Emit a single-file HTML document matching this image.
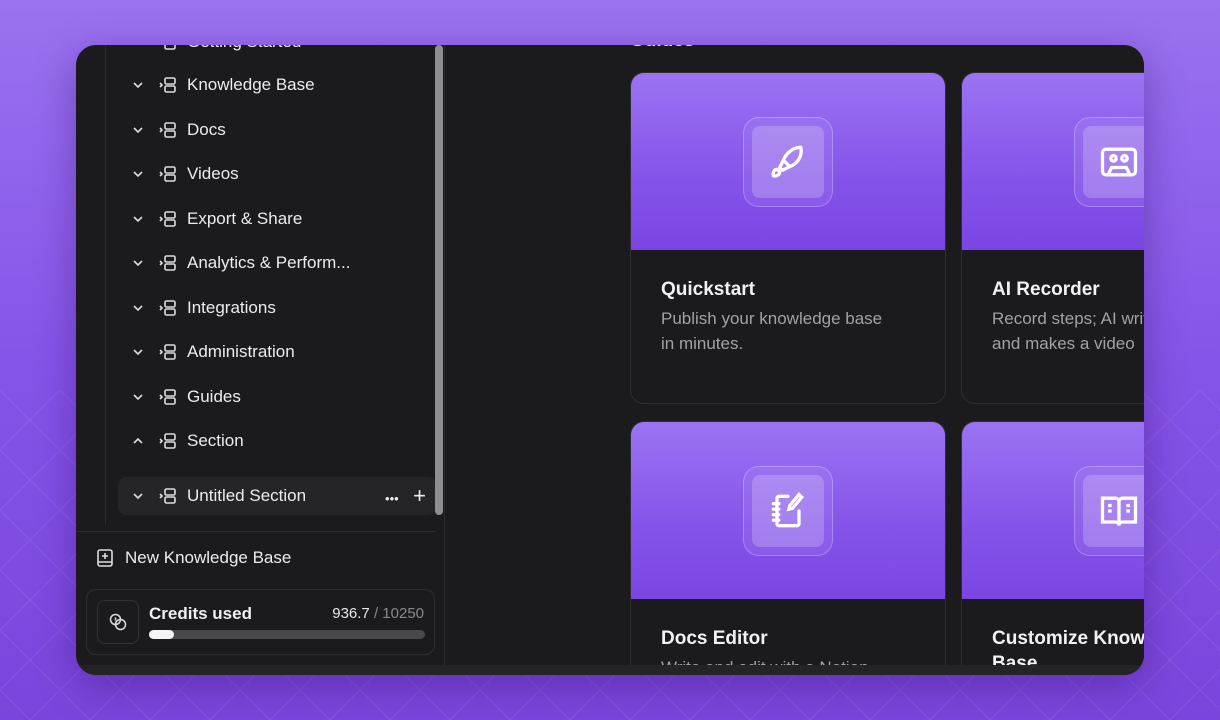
<!DOCTYPE html>
<html><head><style>
*{margin:0;padding:0;box-sizing:border-box}
body{width:1220px;height:720px;overflow:hidden;font-family:"Liberation Sans",sans-serif;background:linear-gradient(180deg,#9a72f0 0%,#8654e8 50%,#7a45dc 100%);position:relative}
.pat{position:absolute;left:0;right:0;bottom:0;height:330px;opacity:.06;background-image:linear-gradient(45deg,transparent 49%,#fff 49.5%,#fff 50.5%,transparent 51%),linear-gradient(-45deg,transparent 49%,#fff 49.5%,#fff 50.5%,transparent 51%);background-size:60px 60px}
.win{position:absolute;left:76px;top:45px;width:1068px;height:630px;background:#1b1b1d;border-radius:20px;overflow:hidden;box-shadow:0 10px 40px rgba(40,0,90,.35)}
.side{position:absolute;left:0;top:0;width:369px;height:630px;border-right:1px solid #2c2c2f}
.tline{position:absolute;left:29px;top:0;width:1px;height:480px;background:#2a2a2d}
.row{position:absolute;left:42px;height:38px;width:318px;color:#ececec;font-size:17px;display:flex;align-items:center}
.row .ch{width:40px;padding-left:13px;flex-shrink:0;display:flex}
.row .ic{width:29px;flex-shrink:0;display:flex}
.sb{position:absolute;left:359px;top:0;width:8px;height:470px;background:#8e8e92;border-radius:4px}
.card{position:absolute;width:316px;height:332px;border:1px solid #2e2e32;border-radius:14px;overflow:hidden;background:#1b1b1d}
.card .hd{height:177px;background:linear-gradient(180deg,#9b73f2 0%,#8553ea 60%,#7c45e3 100%);position:relative}
.ob{position:absolute;left:112px;top:44px;width:90px;height:90px;border-radius:16px;background:rgba(255,255,255,.08);border:1px solid rgba(255,255,255,.25)}
.ib{position:absolute;left:8px;top:8px;width:72px;height:72px;border-radius:8px;background:rgba(255,255,255,.2);display:flex;align-items:center;justify-content:center}
.card h3{position:absolute;left:30px;top:206px;font-size:19px;font-weight:bold;color:#f2f2f2;white-space:nowrap}
.card p{position:absolute;left:30px;top:233px;font-size:17px;line-height:25px;color:#a2a2a6;width:232px}
</style></head><body>
<div class="pat"></div>
<div class="win">
 <div class="side">
  <div class="tline"></div>
  <div style="position:absolute;left:42px;top:432px;width:318px;height:38px;background:#252528;border-radius:8px"></div>
  <div class="row" style="top:-22px"><span class="ch"></span><span class="ic"><svg width="20" height="20" viewBox="0 0 20 20" fill="none" stroke="#ddd" stroke-width="1.6"><rect x="7" y="3" width="10" height="6" rx="1.5"/><rect x="7" y="11" width="10" height="6" rx="1.5"/><path d="M2 8l2 2-2 2"/></svg></span><span class="t">Getting Started</span></div>
  <div id="rows"></div>
  <div class="sb"></div>
  <div style="position:absolute;left:0;top:486px;width:360px;height:1px;background:#2c2c2f"></div>
  <div style="position:absolute;left:20px;top:503px;color:#ececec;font-size:17px;display:flex;align-items:center"><svg width="18" height="20" viewBox="0 0 18 20" fill="none" stroke="#ddd" stroke-width="1.6"><rect x="2" y="2" width="14" height="16" rx="2"/><path d="M2 14h14M9 5v6M6 8h6"/></svg><span style="margin-left:11px">New Knowledge Base</span></div>
  <div style="position:absolute;left:10px;top:544px;width:349px;height:66px;border:1px solid #2e2e32;border-radius:10px">
   <div style="position:absolute;left:10px;top:10px;width:42px;height:44px;border:1px solid #333;border-radius:8px;display:flex;align-items:center;justify-content:center"><svg width="20" height="20" viewBox="0 0 20 20" fill="none" stroke="#ddd" stroke-width="1.5"><circle cx="7.5" cy="7.5" r="5"/><circle cx="12.5" cy="12.5" r="5"/><path d="M7.5 5.5v3"/></svg></div>
   <div style="position:absolute;left:62px;top:14px;color:#f0f0f0;font-size:17px;font-weight:bold">Credits used</div>
   <div style="position:absolute;right:10px;top:15px;color:#e8e8e8;font-size:15px">936.7 <span style="color:#8a8a8e">/ 10250</span></div>
   <div style="position:absolute;left:62px;top:40px;width:276px;height:9px;border-radius:5px;background:#48484c"><div style="width:25px;height:9px;border-radius:5px;background:#f4f4f4"></div></div>
  </div>
 </div>
 <div style="position:absolute;left:554px;top:-15px;color:#eee;font-size:19px;font-weight:bold">Guides</div>
 <div class="card" style="left:554px;top:27px"><div class="hd"><div class="ob"><div class="ib"><svg width="44" height="44" viewBox="0 0 24 24" fill="none" stroke="#fff" stroke-width="1.8" stroke-linecap="round" stroke-linejoin="round"><path d="M19 4c-4 0-8 3-9.5 7l3.5 3.5c4-1.5 7-5.5 6-10.5z"/><path d="M9.5 11l-2 4 1.5 1.5 4-2"/><path d="M6 16c-1.5 0-2.5 2-2 3.5 1.5.5 3.5-.5 3.5-2z"/></svg></div></div></div><h3>Quickstart</h3><p>Publish your knowledge base in minutes.</p></div>
 <div class="card" style="left:885px;top:27px"><div class="hd"><div class="ob"><div class="ib"><svg width="44" height="44" viewBox="0 0 24 24" fill="none" stroke="#fff" stroke-width="1.8"><rect x="3" y="5" width="18" height="14" rx="2"/><circle cx="9" cy="10" r="1.5"/><circle cx="15" cy="10" r="1.5"/><path d="M6 19l2-4h8l2 4"/></svg></div></div></div><h3>AI Recorder</h3><p style="white-space:nowrap">Record steps; AI writes it<br>and makes a video</p></div>
 <div class="card" style="left:554px;top:376px"><div class="hd"><div class="ob"><div class="ib"><svg width="44" height="44" viewBox="0 0 24 24" fill="none" stroke="#fff" stroke-width="1.8" stroke-linecap="round"><path d="M12 4H7a1 1 0 0 0-1 1v14a1 1 0 0 0 1 1h10a1 1 0 0 0 1-1v-7"/><path d="M4 8h3M4 11h3M4 14h3M4 17h3"/><path d="M18 3l1.5 1.5-5 6-2 .5.5-2z"/></svg></div></div></div><h3>Docs Editor</h3><p>Write and edit with a Notion-like editor</p></div>
 <div class="card" style="left:885px;top:376px"><div class="hd"><div class="ob"><div class="ib"><svg width="44" height="44" viewBox="0 0 24 24" fill="none" stroke="#fff" stroke-width="1.8"><path d="M3 5h7a2 2 0 0 1 2 2v13a2 2 0 0 0-2-2H3zM21 5h-7a2 2 0 0 0-2 2v13a2 2 0 0 1 2-2h7z"/><path d="M6 9h2M6 12h2M16 9h2M16 12h2"/></svg></div></div></div><h3>Customize Knowledge</h3><h3 style="top:231px">Base</h3></div>
 <div style="position:absolute;left:0;top:620px;width:1068px;height:10px;background:#242427"></div>
</div>
<script>
var n=["Knowledge Base","Docs","Videos","Export &amp; Share","Analytics &amp; Perform...","Integrations","Administration","Guides","Section","Untitled Section"];
var h="";n.forEach(function(t,i){var up=i==8;h+='<div class="row" style="top:'+(21+i*44.5+(i==9?10:0))+'px"><span class="ch"><svg width="14" height="14" viewBox="0 0 14 14" fill="none" stroke="#ddd" stroke-width="1.6"><path d="'+(up?'M3 9l4-4 4 4':'M3 5l4 4 4-4')+'"/></svg></span><span class="ic"><svg width="20" height="20" viewBox="0 0 20 20" fill="none" stroke="#ddd" stroke-width="1.6"><rect x="7" y="3" width="10" height="6" rx="1.5"/><rect x="7" y="11" width="10" height="6" rx="1.5"/><path d="M2 8l2 2-2 2"/></svg></span><span class="t">'+t+'</span>'+(i==9?'<span style="margin-left:auto;margin-right:10px;font-size:13px;letter-spacing:0">•••&nbsp;&nbsp;&nbsp;&nbsp;<span style="font-size:22px">+</span></span>':'')+'</div>';});
document.getElementById("rows").innerHTML=h;
</script>
</body></html>
